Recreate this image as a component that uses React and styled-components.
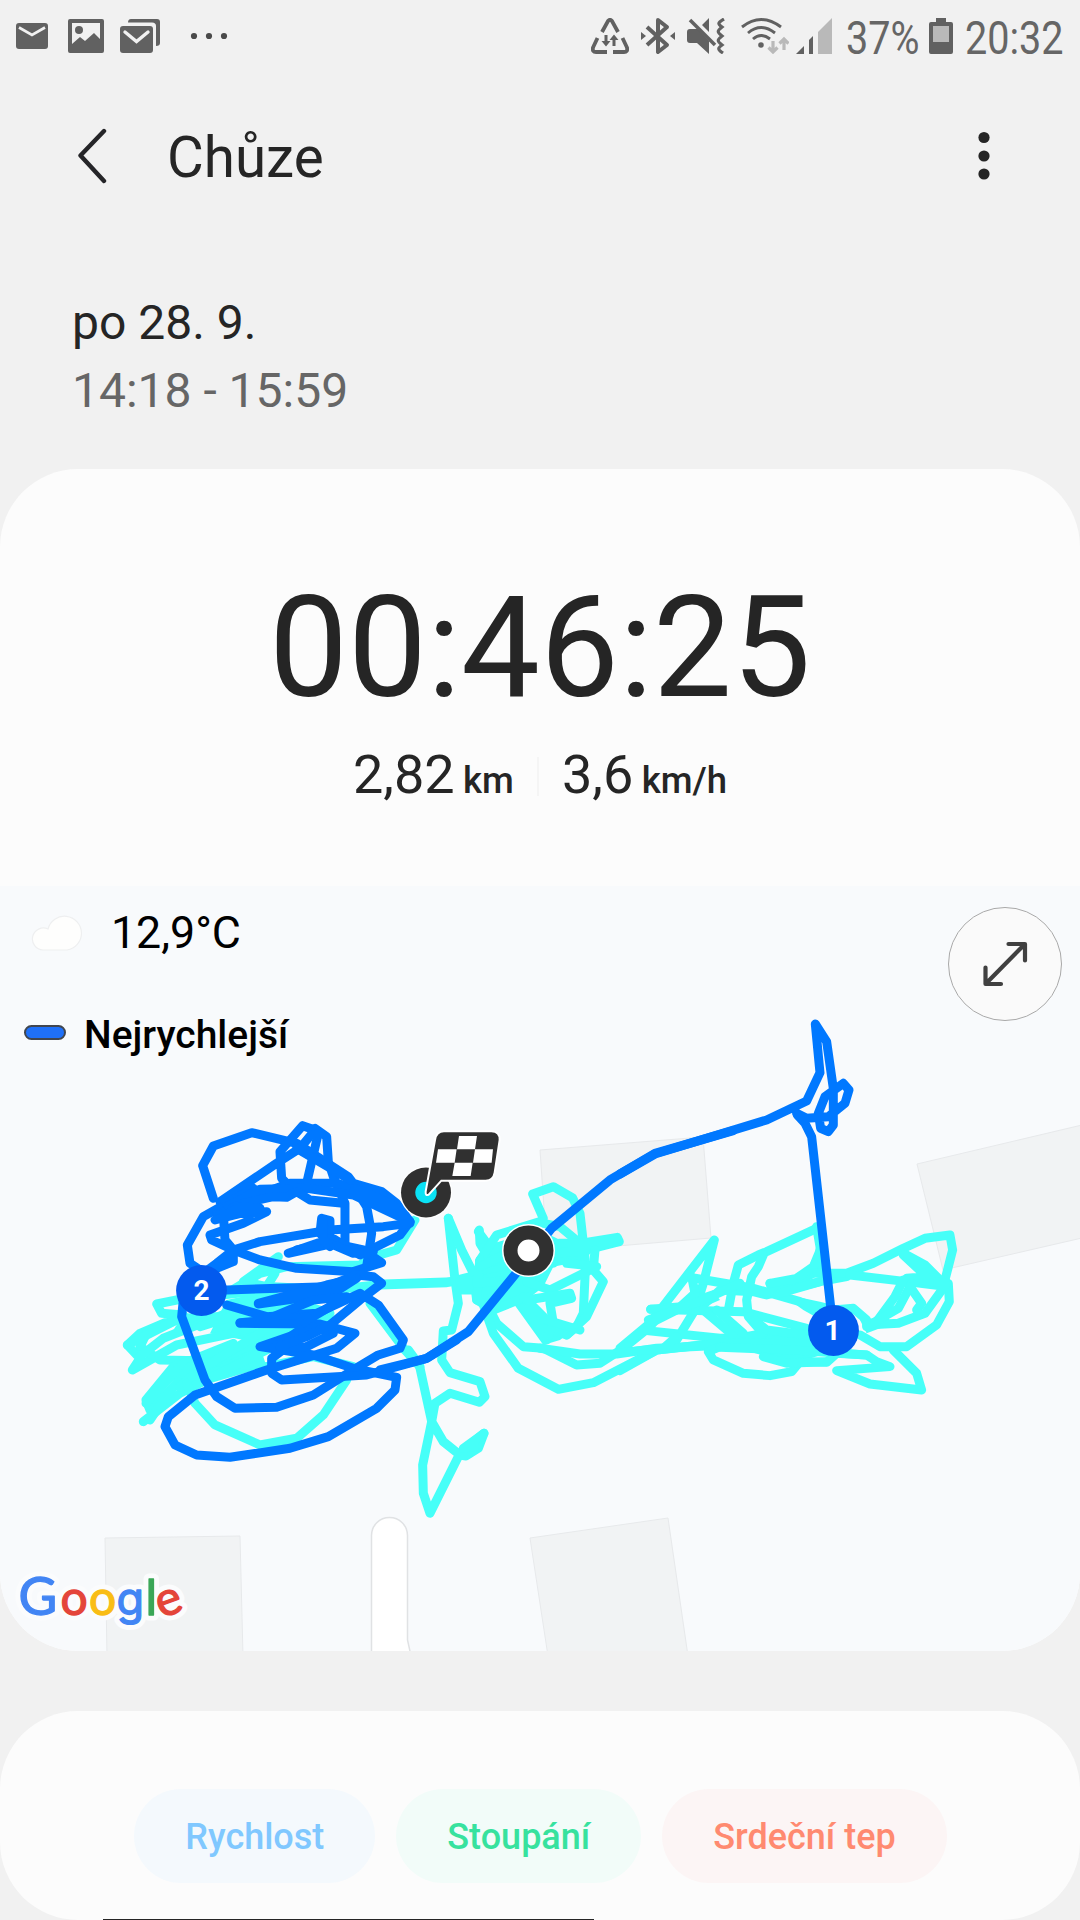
import styled, { createGlobalStyle } from "styled-components";

const App = () => {
  return (
    <Screen>
      <GlobalStyle />
      <StatusBar />
      <Header />
      <DateBlock>
        <p>po 28. 9.</p>
        <p className="time">14:18 - 15:59</p>
      </DateBlock>
      <WorkoutCard>
        <Summary>
          <Duration>00:46:25</Duration>
          <Stats>
            <Stat>
              2,82 <span>km</span>
            </Stat>
            <Divider />
            <Stat>
              3,6 <span>km/h</span>
            </Stat>
          </Stats>
        </Summary>
        <RouteMap />
      </WorkoutCard>
      <ChartCard>
        <Chip $color="#80c8ff" $background="#f4f9fd">Rychlost</Chip>
        <Chip $color="#37e29e" $background="#f2fcf9">Stoupání</Chip>
        <Chip $color="#ff8a70" $background="#fcf5f5">Srdeční tep</Chip>
        <ToastEdge />
      </ChartCard>
    </Screen>
  );
};

const StatusBar = () => (
  <StatusWrapper>
    <Notifications>
      <svg width="32" height="26" viewBox="0 0 32 26">
        <rect width="32" height="26" rx="3" fill="#616161" />
        <path d="M3 4.5 16 12 29 4.5" fill="none" stroke="#f1f1f1" strokeWidth="2.6" />
      </svg>
      <svg width="36" height="34" viewBox="0 0 36 34">
        <path fillRule="evenodd" fill="#616161" d="M2 0h32a2 2 0 0 1 2 2v30a2 2 0 0 1-2 2H2a2 2 0 0 1-2-2V2a2 2 0 0 1 2-2zM4 4v21l8-7 5 4 9-8 6 6V4z" />
        <circle cx="11" cy="11" r="4" fill="#616161" />
      </svg>
      <svg width="40" height="34" viewBox="0 0 40 34">
        <path d="M8 3.5Q8 0 11 0h26a3 3 0 0 1 3 3v21q0 3-4 3V7q0-3.5-4-3.5z" fill="#616161" />
        <rect y="7" width="33" height="27" rx="3" fill="#616161" />
        <path d="m5 13 11.5 9.5L28 13" fill="none" stroke="#f1f1f1" strokeWidth="3.4" strokeLinecap="round" />
      </svg>
      <svg width="38" height="8" viewBox="0 0 38 8">
        <g fill="#4a4a4a">
          <circle cx="4" cy="4" r="3.1" />
          <circle cx="19" cy="4" r="3.1" />
          <circle cx="34" cy="4" r="3.1" />
        </g>
      </svg>
    </Notifications>
    <SystemIcons>
      <svg width="38" height="36" viewBox="0 0 38 36" fill="none" stroke="#616161" strokeWidth="3.8">
        <path d="m11 14 6-11q2-2.5 4 0l6 11M6.5 20 2 29.5Q1 34 5 34h11M31.5 20 36 29.5q1 4.5-3 4.5H22" />
        <path d="M15 17v9M23 28v-9" strokeWidth="3" />
        <path d="M10.5 23h9L15 28.500zM18.5 22h9L23 16.500z" fill="#616161" stroke="none" />
      </svg>
      <svg width="34" height="38" viewBox="0 0 34 38" fill="none" stroke="#616161" strokeWidth="4">
        <path d="m6 10 20 18-9 7V3l9 7L6 28" strokeLinejoin="round" />
        <path d="m0 15 5 4-5 4zM34 15l-5 4 5 4z" fill="#616161" stroke="none" />
      </svg>
      <svg width="38" height="36" viewBox="0 0 38 36">
        <path d="M3 11h8l11 12v13L10 25H3q-3 0-3-3v-8q0-3 3-3zM15 7l7-7v14z" fill="#616161" />
        <path d="m3 2 25 25" stroke="#616161" strokeWidth="3.5" />
        <path d="M37 1c-7 4-6 5-2 8-5 4-5 5 0 9-5 4-5 5 0 9-4 3-5 4 1 8" fill="none" stroke="#616161" strokeWidth="3.2" />
      </svg>
      <svg width="48" height="36" viewBox="0 0 48 36">
        <path d="M1 9Q20-6 40 9M7 15q13-11 27 0M12 21q8-7 17 0" fill="none" stroke="#616161" strokeWidth="2.900" />
        <circle cx="20" cy="27" r="2.8" fill="#616161" />
        <path d="M32 23v11M27.5 29.500 32 34l4.500-4.500M43 32V21M38.5 25.500 43 21l4.500 4.500" fill="none" stroke="#b9b9b9" strokeWidth="3.2" />
      </svg>
      <svg width="36" height="36" viewBox="0 0 36 36">
        <path d="M0 36h8v-8zM13 22l4-4v18h-4z" fill="#616161" />
        <path d="M22 14 36 0v36H22z" fill="#b9b9b9" />
      </svg>
      <StatusText $width={71}>37%</StatusText>
      <svg width="24" height="36" viewBox="0 0 24 36">
        <path d="M7 0h10v4h5q2 0 2 2v28q0 2-2 2H2q-2 0-2-2V6q0-2 2-2h5z" fill="#616161" />
        <path d="M4 8h16v16H4z" fill="#b9b9b9" />
      </svg>
      <StatusText $width={100}>20:32</StatusText>
    </SystemIcons>
  </StatusWrapper>
);

const Header = () => (
  <HeaderWrapper>
    <svg width="30" height="56" viewBox="0 0 30 56">
      <path d="M27 3 3.5 27.500 27 53" fill="none" stroke="#252528" strokeWidth="4.4" strokeLinecap="round" strokeLinejoin="round" />
    </svg>
    <h1>Chůze</h1>
    <svg width="12" height="50" viewBox="0 0 12 50" fill="#252525">
      <circle cx="6" cy="6.5" r="5.6" />
      <circle cx="6" cy="25" r="5.6" />
      <circle cx="6" cy="43" r="5.6" />
    </svg>
  </HeaderWrapper>
);

const buildings = [
  "540,264 703,251 711,352 547,366",
  "917,278 1082,239 1082,352 943,384",
  "105,652 240,650 243,770 107,770",
  "530,652 668,632 688,770 548,770",
];

// Track points are stored at three units per pixel, relative to each area
const areas = [
  {
    origin: "100 214",
    fills: [
      "380,600 520,570 640,640 640,700 480,730 330,700",
      "240,780 480,740 500,800 330,850 270,870 220,830",
      "250,645 340,640 310,690 220,690",
    ],
    slow: [
      "945,360 890,450 820,470 780,495 560,500 480,520 380,580",
      "1060,545 850,552 700,570 520,560",
      "535,470 430,545 500,560 525,520",
      "500,570 230,600 170,612 185,640 250,645 120,700 82,735 120,775 97,810 230,735 400,700 560,650",
      "240,655 140,700 120,740 180,780 300,782 500,800 640,770 760,800",
      "82,735 240,655 350,650",
      "120,770 190,715 330,660 480,600",
      "300,680 560,600 690,640 480,720 220,800 138,900 150,930 250,830 550,690",
      "138,910 250,790 400,730",
      "130,965 240,880 300,850 500,750 690,660",
      "150,960 190,900 270,800",
      "240,860 290,815 480,700",
      "260,850 285,910 345,975 480,1035 590,1015 670,945 740,840",
      "810,610 915,750 960,800",
    ],
    blues: [
      "340,295 308,197 340,138 455,98 590,130 745,230 760,250 845,275 890,310 930,365",
      "360,305 530,190 600,145 645,90 608,77 540,155 545,235 570,260",
      "645,85 680,110 685,185 700,230 735,310 735,440",
      "655,100 620,250",
      "460,265 310,350 262,435 270,490 300,510",
      "350,330 460,290 570,250 710,250 765,265 800,320 815,400 800,500",
      "590,145 700,210 750,240",
      "765,265 870,310 930,365 760,285 620,265 480,268 380,320",
      "730,310 630,300 590,275 560,292 520,290 430,310 350,345 500,335 430,370 330,405 335,420 400,450 480,480 590,505 760,515 845,488 790,450 700,430 565,460 680,420 660,400 665,355 690,362 690,410 780,465 900,405 930,365",
      "930,370 850,380 690,390 480,425 400,450 350,490 310,520",
      "370,340 375,420 400,450 400,485 350,505",
      "345,360 480,325 420,320 370,350",
      "590,450 690,430 760,460 820,455",
      "670,360 670,420 690,440",
      "380,570 680,560 770,525 820,530 845,550 780,600 690,675",
      "475,610 680,555 770,535 700,580 560,600 475,612",
      "380,615 500,650 650,640 780,580 835,615 910,720 900,745 835,765 760,810 640,885 530,922 405,925 350,890 315,840 245,650 250,600",
      "420,668 640,650 740,590 640,600 520,650",
      "420,670 660,672 765,700 710,745 500,810 285,885 205,950 195,980 225,1035 290,1065 390,1072 570,1045 685,1010 830,925 885,870 890,832 760,805 640,765 480,740 640,685",
      "600,690 520,745 620,740 700,700 640,680 515,775 515,820 545,840 800,825 980,775 1070,720",
      "690,675 620,710 540,740",
    ],
  },
  {
    origin: "380 214",
    fills: [
      "285,480 340,430 480,390 560,430 640,440 620,480 520,500 490,560 440,600 500,670 580,690 540,720 490,735 400,610 340,625 285,600",
    ],
    slow: [
      "0,555 200,548 370,505",
      "490,355 458,282 520,260 578,294 600,340 617,490 610,640 590,680 560,705 520,690",
      "205,355 225,540 235,610 215,690 190,693 185,780 210,818 300,845 315,890 298,907 210,880 165,910 155,965 190,1025 240,1065 258,1068 295,1045 312,1000 240,1060 150,1240 130,1180 128,1095 155,965 118,795 85,750",
      "312,1000 250,1045 285,1040",
      "205,355 245,450 280,520 290,600",
      "298,390 300,430 330,480",
      "295,395 350,470",
      "240,545 300,540 400,520 240,570 320,570",
      "330,630 350,670 430,740 490,745 590,795 660,790 730,745 810,680 860,620",
      "305,600 340,700 415,805 535,868 640,848 830,750 1050,725",
      "480,745 600,762 710,762 830,745 1050,735",
      "480,365 350,405 300,480 290,600 340,630 440,590",
      "300,480 290,550 400,540",
      "490,370 540,380 600,430",
      "400,450 540,430 600,430 712,412 718,425 600,455 500,460",
      "645,450 640,510 670,545 620,650 560,705",
      "560,490 650,500 510,570 440,545",
      "440,600 570,580 575,595 510,610 520,670 500,720",
      "430,590 500,660 600,690",
      "300,500 400,450 520,490",
    ],
    blues: ["0,810 140,775 265,695 400,530 515,385 690,240 825,160 1060,92"],
  },
  {
    origin: "620 114",
    fills: [
      "330,1010 420,1000 560,995 620,1060 540,1085 440,1070 300,1030",
      "480,880 600,905 700,930 700,970 620,970 550,930",
      "220,890 280,870 300,900 230,930",
      "720,960 800,950 820,970 740,1000",
    ],
    slow: [
      "0,1045 90,970 140,905 283,720 250,850 225,930 170,1020",
      "92,928 250,915 300,870 400,875 440,885 600,845 680,830",
      "92,928 370,935 560,985",
      "225,835 400,865 540,905 640,940",
      "215,830 225,880 170,930 100,965",
      "590,685 440,755 415,765 355,795 340,850 325,930",
      "430,765 415,800 395,830 380,900 385,950 420,990",
      "450,850 455,865 530,845 600,810 600,740 590,680",
      "450,850 530,835 580,800 605,740",
      "480,880 600,845",
      "590,820 680,820 760,790 850,745 915,715 990,705 998,750 975,840 980,855",
      "690,825 860,845 980,860",
      "850,760 915,795 960,840 985,850 988,905 950,975 860,1040 780,1040 720,1005",
      "850,765 920,830 860,835 980,850 915,940 835,970 740,975",
      "850,840 825,890 770,965",
      "875,850 835,925 740,980",
      "870,860 905,910 890,930",
      "80,992 300,1015 560,1010 640,1000",
      "85,960 250,900 360,850",
      "250,930 350,1015 430,1000",
      "290,930 370,1000",
      "0,1112 110,1050 300,1030 640,1025",
      "0,1058 130,1045 170,1010",
      "390,950 440,990 600,1010",
      "640,930 700,925 740,960",
      "300,1040 265,1055 280,1080 370,1120 450,1127 515,1115 540,1085 620,1087 650,1060 740,1065 770,1085 810,1100 650,1112 750,1152 905,1170 890,1120 820,1050",
      "300,1042 520,1050 740,1065",
      "430,1070 500,1090 620,1085",
    ],
    blues: [
      "0,522 105,462 440,360 560,303 600,218 586,72 620,125 640,265 640,375 625,395 602,385 595,340 615,290 670,250 687,270 675,310 625,350 560,355 530,340",
      "532,345 555,370 575,410 632,920",
    ],
  },
];

const logo = [
  { letter: "G", x: 18.5, size: 53, font: "Lato", color: "#4285f4" },
  { letter: "o", x: 60.5, size: 48, font: "Lato", color: "#e4453a" },
  { letter: "o", x: 89, size: 48, font: "Lato", color: "#f9bd15" },
  { letter: "g", x: 116.5, size: 45, font: "Inter", color: "#4285f4" },
  { letter: "l", x: 145.5, size: 49, font: "Lato", color: "#3aa757" },
  { letter: "e", x: 156.5, size: 48, font: "Lato", color: "#e4453a" },
];

const RouteMap = () => (
  <MapWrapper>
    <MapCanvas viewBox="0 0 1080 765">
      {buildings.map((points) => (
        <polygon key={points} points={points} fill="#f1f3f4" stroke="#e7e9eb" />
      ))}
      <path d="M371.5 775V649.500a18 18 0 0 1 36 0V754l4 18" fill="#fff" stroke="#e0e2e4" strokeWidth="1.5" />
      {areas.map(({ origin, slow, fills }) => (
        <Track key={origin} $color="#46fff8" transform={`translate(${origin}) scale(0.3333)`}>
          {fills.map((points) => (
            <polygon key={points} points={points} />
          ))}
          {slow.map((points) => (
            <polyline key={points} points={points} />
          ))}
        </Track>
      ))}
      {areas.map(({ origin, blues }) => (
        <Track key={origin} $color="#0078ff" transform={`translate(${origin}) scale(0.3333)`}>
          {blues.map((points) => (
            <polyline key={points} points={points} />
          ))}
        </Track>
      ))}
      <circle cx="201.5" cy="404.5" r="25.4" fill="#035aee" />
      <MarkerLabel x="201.5" y="413.5">2</MarkerLabel>
      <circle cx="833.5" cy="444.5" r="25.4" fill="#035aee" />
      <MarkerLabel x="832.5" y="453.5">1</MarkerLabel>
      <circle cx="528.5" cy="364.5" r="18" fill="#fff" stroke="#fff" strokeWidth="17" />
      <circle cx="528.5" cy="364.5" r="18" fill="#fff" stroke="#303030" strokeWidth="14" />
      <circle cx="426" cy="306.5" r="26.3" fill="#fff" />
      <circle cx="426" cy="306.5" r="25" fill="#303030" />
      <circle cx="426" cy="306.5" r="10.7" fill="#0ae2f5" />
      <g transform="translate(380 214) scale(0.3333)">
        <path d="m137 275 28-155q4-26 27-26h142q26 0 25 26l-15 98q-4 24-27 24H184l-38 42q-10 5-9-9z" fill="#303030" stroke="#fff" strokeWidth="6" />
        <path d="m237 108 54 0-6 40h-54zM174 148h56l-6 40h-56zM285 148h54l-4 40h-56zM224 188h54l-6 40h-55z" fill="#fff" />
      </g>
      {["halo", "ink"].map((layer) => (
        <g key={layer} aria-hidden={layer === "halo"}>
          {logo.map(({ letter, x, size, font, color }) => (
            <LogoLetter
              key={x}
              x={x}
              y="728.5"
              fontSize={size}
              $font={font}
              $color={layer === "halo" ? "#fbfcfd" : color}
              $stroke={layer === "halo" ? 11 : 1.3}
              transform={letter === "e" ? "rotate(-20 170 717)" : undefined}
            >
              {letter}
            </LogoLetter>
          ))}
        </g>
      ))}
    </MapCanvas>
    <MapOverlay>
      <div>
        <Weather>
          <svg width="52" height="36" viewBox="0 0 52 36">
            <path d="M12 35a11 11 0 1 1 5-21 17 17 0 1 1 19 21z" fill="#fefefd" stroke="#eeeff0" strokeWidth="1.2" />
          </svg>
          12,9°C
        </Weather>
        <Legend>
          <i />
          Nejrychlejší
        </Legend>
      </div>
      <ExpandButton aria-label="Zvětšit mapu">
        <svg width="112" height="112" viewBox="1 1 112 112">
          <path d="M60.5 37H77v16.500M37.5 60.500v16.500H53M76 38 38.500 76" fill="none" stroke="#404040" strokeWidth="4.2" strokeLinecap="round" strokeLinejoin="round" />
        </svg>
      </ExpandButton>
    </MapOverlay>
  </MapWrapper>
);

const GlobalStyle = createGlobalStyle`
  * {
    box-sizing: border-box;
  }

  body {
    margin: 0;
    background: #f1f1f1;
    font-family: Roboto, sans-serif;
  }

  svg {
    display: block;
    flex-shrink: 0;
  }
`;

const Screen = styled.main`
  width: 1080px;
  height: 1920px;
  overflow: hidden;
  color: #252525;
`;

const StatusWrapper = styled.div`
  height: 76px;
  padding: 0 15px 0 16px;
  display: flex;
  justify-content: space-between;
`;

const Notifications = styled.div`
  display: flex;
  align-items: center;
  height: 72px;
  gap: 16px;

  svg:first-child {
    margin-right: 4px;
  }

  svg:last-child {
    margin-left: 14px;
  }
`;

const SystemIcons = styled.div`
  display: flex;
  align-items: center;
  height: 72px;
  gap: 12px;

  svg:nth-child(4) {
    margin-left: 4px;
    margin-right: -5px;
  }

  svg:nth-child(5) {
    margin-right: 2px;
  }
`;

const StatusText = styled.span`
  width: ${({ $width }) => $width}px;
  font-size: 46px;
  line-height: 76px;
  margin-top: 3px;
  color: #666;
  white-space: nowrap;
  transform: scaleX(0.86);
  transform-origin: left;
`;

const HeaderWrapper = styled.header`
  height: 166px;
  padding: 0 90px 0 77px;
  display: flex;
  align-items: center;

  h1 {
    flex: 1;
    margin: -2px 0 0 60px;
    font-size: 56.5px;
    font-weight: 400;
  }

  svg {
    margin-top: -6px;
  }
`;

const DateBlock = styled.div`
  height: 227px;
  padding: 47px 72px 0;
  font-size: 48px;
  line-height: 68px;

  p {
    margin: 0;
  }

  .time {
    color: #666;
  }
`;

const WorkoutCard = styled.section`
  height: 1182px;
  border-radius: 78px;
  overflow: hidden;
  background: #fcfcfc;
`;

const Summary = styled.div`
  height: 417px;
  padding-top: 99px;
  display: flex;
  flex-direction: column;
  align-items: center;
`;

const Duration = styled.div`
  font-size: 140.5px;
  line-height: 160px;
`;

const Stats = styled.div`
  margin-top: 15px;
  display: flex;
  align-items: center;
  gap: 23px;
`;

const Stat = styled.div`
  font-size: 54px;
  line-height: 64px;
  word-spacing: -5px;

  span {
    font-size: 36.5px;
    font-weight: 500;
  }
`;

const Divider = styled.div`
  width: 2px;
  height: 39px;
  margin-top: -4px;
  background: #f5f5f5;
`;

const MapWrapper = styled.div`
  position: relative;
  height: 765px;
  background: #f8fafc;
`;

const MapCanvas = styled.svg`
  position: absolute;
  inset: 0;
  width: 1080px;
  height: 765px;
`;

const Track = styled.g`
  fill: none;
  stroke: ${({ $color }) => $color};
  stroke-width: 27px;
  stroke-linecap: round;
  stroke-linejoin: round;

  polygon {
    fill: ${({ $color }) => $color};
    stroke: none;
  }
`;

const MarkerLabel = styled.text`
  fill: #fff;
  font-size: 28px;
  font-weight: 700;
  text-anchor: middle;
`;

const LogoLetter = styled.text`
  font-family: ${({ $font }) => $font}, sans-serif;
  fill: ${({ $color }) => $color};
  stroke: ${({ $color }) => $color};
  stroke-width: ${({ $stroke }) => $stroke}px;
  stroke-linejoin: round;
`;

const MapOverlay = styled.div`
  position: relative;
  display: flex;
  justify-content: space-between;
  padding: 15px 18px 0 24px;
  color: #000;
`;

const Weather = styled.div`
  display: flex;
  align-items: center;
  gap: 28px;
  height: 64px;
  padding-left: 7px;
  font-size: 44.7px;
`;

const Legend = styled.div`
  display: flex;
  align-items: center;
  gap: 18px;
  height: 60px;
  margin-top: 40px;
  font-size: 39px;
  font-weight: 500;

  i {
    width: 42px;
    height: 15px;
    margin-top: -5px;
    border: 2.5px solid #41464f;
    border-radius: 8px;
    background: #1f70f8;
  }
`;

const ExpandButton = styled.button`
  width: 114px;
  height: 114px;
  margin-top: 6px;
  padding: 0;
  border: 1px solid #a9a9a9;
  border-radius: 50%;
  background: #fafafa;
`;

const ChartCard = styled.section`
  position: relative;
  display: flex;
  justify-content: center;
  align-items: flex-start;
  gap: 21px;
  height: 209px;
  margin-top: 60px;
  padding: 78px 0 0 1px;
  border-radius: 78px;
  background: #fcfcfc;
`;

const Chip = styled.div`
  height: 94px;
  padding: 0 51px;
  border-radius: 47px;
  background: ${({ $background }) => $background};
  color: ${({ $color }) => $color};
  font-size: 36px;
  font-weight: 500;
  line-height: 96px;
`;

// Top edge of the panel that slides in from below
const ToastEdge = styled.div`
  position: absolute;
  left: 103px;
  bottom: 0;
  width: 491px;
  height: 1px;
  background: #252525;
`;

export default App;
